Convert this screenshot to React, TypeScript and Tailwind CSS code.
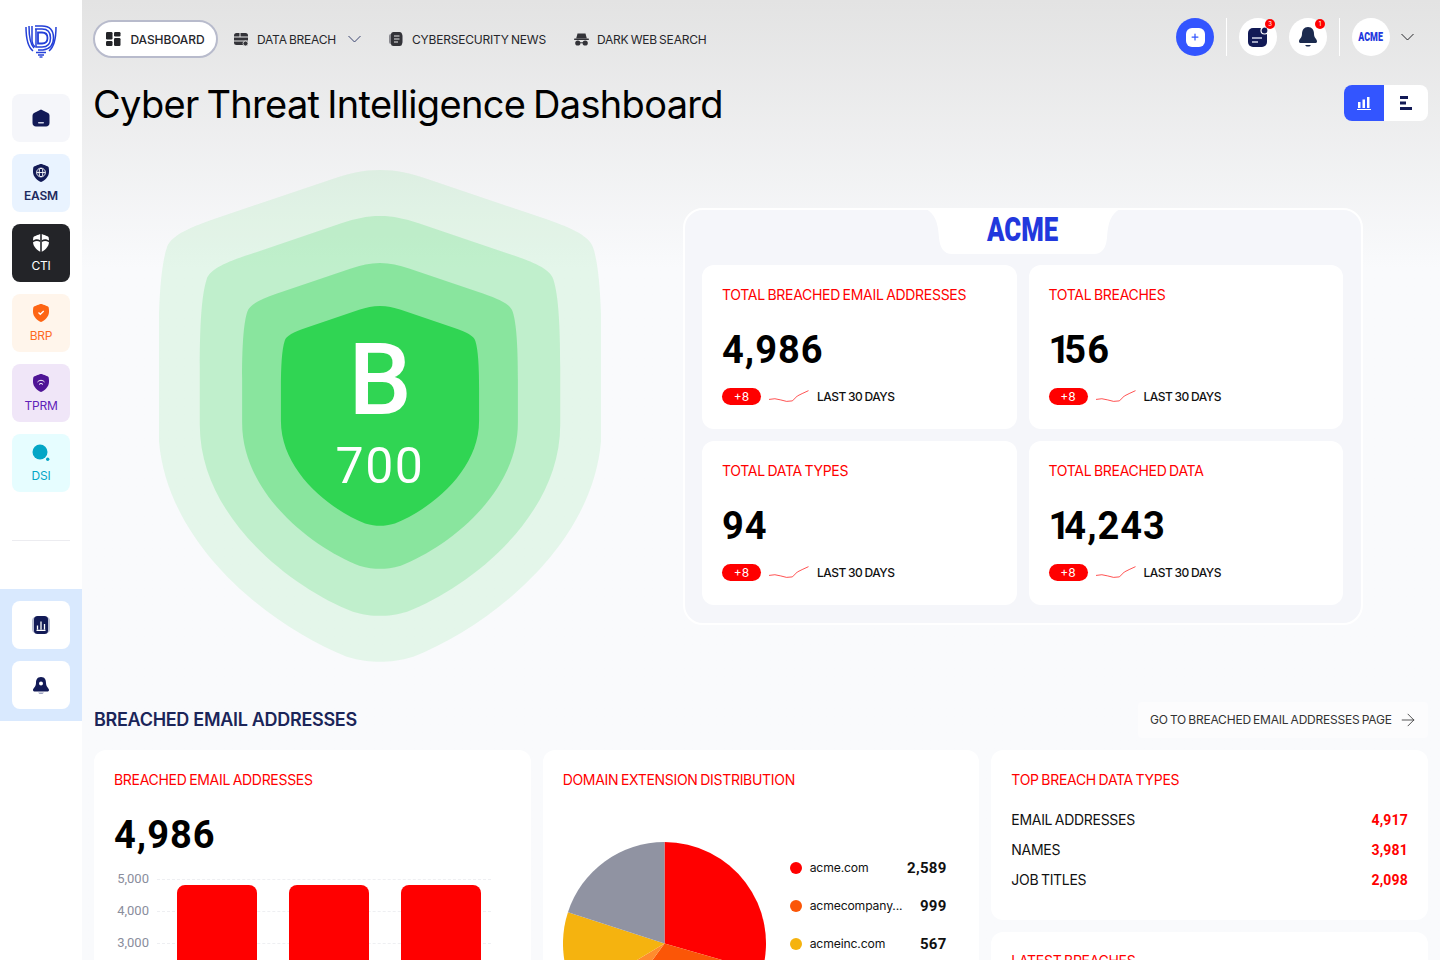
import { ArrowRight, Plus } from "lucide-react";

const shieldPath =
  "M0 0 C-50 0 -90 10 -140 26 L-500 148 C-580 176 -630 200 -640 235 C-658 290 -665 400 -665 560 L-665 770 C-665 1110 -330 1370 -100 1460 C-60 1472 -30 1475 0 1475 C30 1475 60 1472 100 1460 C330 1370 665 1110 665 770 L665 560 C665 400 658 290 640 235 C630 200 580 176 500 148 L140 26 C90 10 50 0 0 0 Z";

// small shield used by the sidebar icons
const miniShield = "M8 0 C9 0 14 2 15 2.6 C15.6 3 16 4 16 8 C16 13 11 17 8 18 C5 17 0 13 0 8 C0 4 .4 3 1 2.6 C2 2 7 0 8 0 Z";

function Logo() {
  return (
    <svg width="32" height="33" viewBox="0 0 32 33" fill="none" stroke="#2440d8" strokeWidth="1.5">
      <path d="M1 2 C1 14 3 22 8 26" />
      <path d="M4 1 C4 12 5 19 9 23" />
      <path d="M7 1 V 16 C7 19 8 20 10 22" />
      <path d="M31 2 C31 14 29 22 24 26" />
      <path d="M10 1 H17 C26 1 28.5 6 28.5 13 C28.5 20 25 24 18 25 H13" />
      <path d="M10 4 H17 C23 4 25.5 7 25.5 13 C25.5 19 23 22 17 22 H11 V4" />
      <path d="M13 7.500 H17 C21 7.500 22.500 9.500 22.500 13 C22.500 16.500 21 18.500 17 18.500 H13 Z" strokeWidth="1.8" />
      <path d="M11 27.500 H21 M13 30 H19" strokeWidth="1.3" />
      <path d="M14.500 32 H17.500" strokeWidth="1.4" />
    </svg>
  );
}

function HomeIcon() {
  return (
    <svg width="18" height="18" viewBox="0 0 18 18">
      <path d="M9 .5 L16 4 C17 4.600 17.500 5.500 17.500 7 V14 C17.500 16 16 17.500 14 17.500 H4 C2 17.500 .5 16 .5 14 V7 C.5 5.500 1 4.600 2 4 Z" fill="#121a56" />
      <rect x="6" y="13" width="6" height="1.500" rx=".7" fill="#cfd3e6" />
    </svg>
  );
}

function EasmIcon() {
  return (
    <svg width="16" height="18" viewBox="0 0 16 18">
      <path d={miniShield} fill="#121a56" />
      <g fill="none" stroke="#fff" strokeWidth=".9">
        <circle cx="8" cy="8.500" r="4.400" />
        <ellipse cx="8" cy="8.500" rx="1.900" ry="4.400" />
        <path d="M3.600 8.500 H12.400" />
      </g>
    </svg>
  );
}

function CtiIcon() {
  return (
    <svg width="16" height="18" viewBox="0 0 16 18">
      <path d={miniShield} fill="#fff" />
      <path d="M7.200 0 H8.800 V18 H7.200 Z" fill="#232428" />
      <path d="M0 6.500 C3 4.800 5 5 7.200 6.200 V8 C5 6.800 3 6.600 0 8.200 Z M16 6.500 C13 4.800 11 5 8.800 6.200 V8 C11 6.800 13 6.600 16 8.200 Z" fill="#232428" />
    </svg>
  );
}

function BrpIcon() {
  return (
    <svg width="16" height="18" viewBox="0 0 16 18">
      <path d={miniShield} fill="#fd6514" />
      <path d="M5.500 8.500 L7.300 10.300 L10.700 7" fill="none" stroke="#fff" strokeWidth="1.300" />
    </svg>
  );
}

function TprmIcon() {
  return (
    <svg width="16" height="18" viewBox="0 0 16 18">
      <path d={miniShield} fill="#4f1596" />
      <path d="M4.500 8 C6.500 5.800 9.500 5.800 11.500 8 M6 10.500 C7.200 9.200 8.800 9.200 10 10.500" fill="none" stroke="#fff" strokeWidth="1" />
    </svg>
  );
}

function DsiIcon() {
  return (
    <svg width="18" height="18" viewBox="0 0 18 18">
      <circle cx="8" cy="8" r="7.500" fill="#04a6c6" />
      <circle cx="15.700" cy="15.300" r="1.700" fill="#04a6c6" />
    </svg>
  );
}

function ReportIcon() {
  return (
    <svg width="18" height="18" viewBox="0 0 18 18">
      <rect x="0" y="1" width="18" height="16" rx="4" fill="#b9bdd2" />
      <rect x="2" y="0" width="14" height="18" rx="3.500" fill="#121a56" />
      <path d="M5.500 13.500 V9.500 M9 13.500 V5.500 M12.500 13.500 V8 M4.500 14.300 H13.500" stroke="#fff" strokeWidth="1.300" />
    </svg>
  );
}

function AlertIcon() {
  return (
    <svg width="16" height="17" viewBox="0 0 16 17">
      <path d="M8 0 C12 0 13 3 13 6 C13 10 16 11 16 13 C16 14 15 14.500 14 14.500 H2 C1 14.500 0 14 0 13 C0 11 3 10 3 6 C3 3 4 0 8 0 Z" fill="#121a56" />
      <circle cx="8" cy="6.500" r="2" fill="#fff" />
      <path d="M5 15.500 H11 L9.500 17 H6.500 Z" fill="#9da2c0" />
    </svg>
  );
}

function SideItem({ icon, label, className }: { icon: React.ReactNode; label?: string; className: string }) {
  return (
    <div className={`flex w-[58px] flex-col items-center justify-center rounded-lg ${label ? "h-[58px] gap-[7px]" : "h-12"} ${className}`}>
      {icon}
      {label && <span className="text-xs leading-[14px] tracking-[-0.2px]">{label}</span>}
    </div>
  );
}

function Sidebar() {
  return (
    <aside className="flex h-full w-[82px] shrink-0 flex-col bg-white">
      <div className="flex h-[94px] justify-center pt-[25px]">
        <Logo />
      </div>
      <div className="flex flex-col items-center gap-3">
        <SideItem icon={<HomeIcon />} className="bg-[#f5f6fa]" />
        <SideItem icon={<EasmIcon />} label="EASM" className="bg-[#e9f3ff] font-semibold text-[#1e2a5e]" />
        <SideItem icon={<CtiIcon />} label="CTI" className="bg-[#232428] text-white" />
        <SideItem icon={<BrpIcon />} label="BRP" className="bg-[#fff5eb] text-[#fd6a1f]" />
        <SideItem icon={<TprmIcon />} label="TPRM" className="bg-[#f0e6f8] text-[#5f22b8]" />
        <SideItem icon={<DsiIcon />} label="DSI" className="bg-[#e6fdff] text-[#04a6c6]" />
      </div>
      <div className="mx-3 mt-12 h-px bg-[#ececf0]" />
      <div className="mt-12 flex flex-col items-center gap-3 bg-[#d9e9fe] py-3">
        <SideItem icon={<ReportIcon />} className="bg-white" />
        <SideItem icon={<AlertIcon />} className="bg-white" />
      </div>
    </aside>
  );
}

function Chevron({ className }: { className: string }) {
  return (
    <svg width="13" height="8" viewBox="0 0 13 8" fill="none" stroke="currentColor" strokeWidth="1" className={className}>
      <path d="M.5 1 L6.500 7 L12.500 1" />
    </svg>
  );
}

function DashIcon() {
  return (
    <svg width="15" height="14" viewBox="0 0 15 14" fill="#232428">
      <rect x="0" y="0" width="6.500" height="7.500" rx="1.200" />
      <rect x="8" y="0" width="6.500" height="4.500" rx="1.200" />
      <rect x="0" y="9" width="6.500" height="5" rx="1.200" />
      <rect x="8" y="6" width="6.500" height="8" rx="1.200" />
    </svg>
  );
}

function BreachIcon() {
  return (
    <svg width="15" height="13" viewBox="0 0 15 13">
      <rect x="0" y="0" width="14" height="12" rx="2.500" fill="#333338" />
      <path d="M0 4 H14 M0 8 H14 M6 0 V4" stroke="#e8e8e8" strokeWidth="1" />
      <circle cx="11.500" cy="10.500" r="2.500" fill="#333338" stroke="#e8e8e8" strokeWidth=".8" />
    </svg>
  );
}

function NewsIcon() {
  return (
    <svg width="15" height="14" viewBox="0 0 15 14">
      <rect x="0" y="2" width="14" height="10" rx="2" fill="#8a8a90" />
      <rect x="2" y="0" width="11" height="14" rx="2.500" fill="#333338" />
      <path d="M5 4 H10.500 M5 7 H10.500 M5 10 H9" stroke="#e8e8e8" strokeWidth="1" />
    </svg>
  );
}

function HatIcon() {
  return (
    <svg width="15" height="13" viewBox="0 0 15 13" fill="#333338">
      <path d="M3.500 .5 H11.500 L12.800 5.500 H2.200 Z" />
      <rect x="0" y="5.500" width="15" height="1.400" rx=".7" />
      <circle cx="3.800" cy="10" r="2.600" />
      <circle cx="11.200" cy="10" r="2.600" />
      <rect x="5.500" y="9.300" width="4" height="1" />
    </svg>
  );
}

function NavItem({ icon, label }: { icon: React.ReactNode; label: string }) {
  return (
    <div className="flex items-center gap-2 text-xs tracking-[-0.2px] text-[#26262b] [word-spacing:-1px]">
      {icon}
      <span className="pt-px">{label}</span>
    </div>
  );
}

function NoteIcon() {
  return (
    <svg width="20" height="20" viewBox="0 0 20 20">
      <rect x="0" y="1" width="19" height="19" rx="5" fill="#121a56" />
      <path d="M4 11 H14 M4 15 H10" stroke="#cfd3e6" strokeWidth="1.500" />
      <circle cx="16.500" cy="3.500" r="3.500" fill="#121a56" stroke="#fff" strokeWidth="1.200" />
    </svg>
  );
}

function BellIcon() {
  return (
    <svg width="18" height="20" viewBox="0 0 18 20" fill="#1b2a4e">
      <path d="M9 0 C13 0 15 3 15 7 C15 11 18 12 18 14.500 C18 15.500 17 16 16 16 H2 C1 16 0 15.500 0 14.500 C0 12 3 11 3 7 C3 3 5 0 9 0 Z" />
      <path d="M6 18 H12 L10.500 19.500 H7.500 Z" />
    </svg>
  );
}

function RoundBadge({ children, count }: { children: React.ReactNode; count: string }) {
  return (
    <div className="relative flex h-[38px] w-[38px] items-center justify-center rounded-full bg-white">
      {children}
      <span className="absolute right-[2px] top-[1px] flex h-2.5 w-2.5 items-center justify-center rounded-full bg-[#ff0000] text-[6px] leading-none text-white">
        {count}
      </span>
    </div>
  );
}

function TopNav() {
  return (
    <div className="flex h-[38px] items-center">
      <div className="-ml-px flex h-[38px] w-[125px] items-center justify-center gap-[9px] rounded-full border-2 border-[#b8bbcc] bg-white text-xs font-medium tracking-[-0.1px] text-[#26262b]">
        <DashIcon />
        <span className="pt-px">DASHBOARD</span>
      </div>
      <div className="ml-4 flex items-center gap-[28px]">
        <div className="flex items-center gap-3">
          <NavItem icon={<BreachIcon />} label="DATA BREACH" />
          <Chevron className="text-[#3b4470]" />
        </div>
        <NavItem icon={<NewsIcon />} label="CYBERSECURITY NEWS" />
        <NavItem icon={<HatIcon />} label="DARK WEB SEARCH" />
      </div>
      <div className="-mt-1 ml-auto flex items-center">
        <div className="flex h-[38px] w-[38px] items-center justify-center rounded-full bg-[#3355ff]">
          <div className="flex h-[19px] w-[19px] items-center justify-center rounded-[6px] bg-white">
            <Plus size={10} strokeWidth={3} className="text-[#3355ff]" />
          </div>
        </div>
        <div className="mx-[12px] h-[38px] w-px bg-white" />
        <RoundBadge count="3">
          <NoteIcon />
        </RoundBadge>
        <div className="w-3" />
        <RoundBadge count="1">
          <BellIcon />
        </RoundBadge>
        <div className="mx-[12px] h-[38px] w-px bg-white" />
        <div className="flex h-[38px] w-[38px] items-center justify-center rounded-full bg-white">
          <span className="scale-x-[.74] font-[Roboto,sans-serif] text-[12px] font-black leading-none text-[#2238dd]">ACME</span>
        </div>
        <Chevron className="ml-[11px] mr-[14px] text-[#26262b]" />
      </div>
    </div>
  );
}

function ViewToggle() {
  return (
    <div className="flex h-9 w-[84px] overflow-hidden rounded-lg bg-white">
      <div className="flex w-10 items-center justify-center bg-[#3355ff]">
        <svg width="14" height="14" viewBox="0 0 14 14" fill="#fff">
          <rect x="1" y="6" width="2.500" height="6" />
          <rect x="5.500" y="3.500" width="2.500" height="8.500" />
          <rect x="10" y="1" width="2.500" height="11" />
          <rect x="0" y="13" width="14" height="1" />
        </svg>
      </div>
      <div className="flex flex-1 items-center justify-center">
        <svg width="12" height="14" viewBox="0 0 12 14" fill="#121a56">
          <rect x="0" y="0" width="8" height="3" />
          <rect x="0" y="5.500" width="6" height="3" />
          <rect x="0" y="11" width="12" height="3" />
        </svg>
      </div>
    </div>
  );
}

function ScoreShield() {
  const layers = [
    { s: 1, y: 0, o: 0.1 },
    { s: 0.813, y: 46, o: 0.2 },
    { s: 0.622, y: 93, o: 0.38 },
    { s: 0.447, y: 136, o: 1 },
  ];
  return (
    <div className="relative h-[492px] w-[442px] shrink-0">
      <svg width="442" height="492" viewBox="0 0 442 492">
        {layers.map((l) => (
          <path
            key={l.s}
            d={shieldPath}
            fill="#30d553"
            fillOpacity={l.o}
            transform={`translate(221 ${l.y}) scale(${l.s / 3})`}
          />
        ))}
      </svg>
      <div className="absolute inset-x-0 top-[150px] flex flex-col items-center font-[Roboto,sans-serif] text-white">
        <span className="text-[100px] font-medium leading-[120px]">B</span>
        <span className="-mt-[3px] text-[50px] leading-[58px] tracking-[1.5px]">700</span>
      </div>
    </div>
  );
}

function Sparkline() {
  return (
    <svg width="40" height="13" viewBox="0 0 41 13" fill="none" stroke="#ff0000" strokeWidth=".7">
      <path d="M0 9.500 L6 8.800 L12 10 L18 11.500 L24 11 L29 6 L34 3.500 L40.500 .5" />
    </svg>
  );
}

// the reference's digit 1 is much narrower than Roboto's tabular one
function Digits({ value }: { value: string }) {
  return (
    <>
      {value.split("").map((c, i) => (
        <span key={i} className={c === "1" ? "tracking-[-6px]" : ""}>
          {c}
        </span>
      ))}
    </>
  );
}

function StatCard({ title, value }: { title: string; value: string }) {
  return (
    <div className="flex h-[164px] flex-col rounded-xl bg-white px-5 pt-[21px]">
      <div className="text-sm leading-[18px] tracking-[-0.3px] text-[#ff0000] [word-spacing:-1px]">{title}</div>
      <div className="mt-[23px] font-[Roboto,sans-serif] text-[38px] font-bold leading-[46px] tracking-[1px] text-black">
        <Digits value={value} />
      </div>
      <div className="mt-[15px] flex items-center gap-2">
        <span className="flex h-[17px] w-[39px] items-center justify-center rounded-full bg-[#ff0000] text-xs text-white">+8</span>
        <Sparkline />
        <span className="text-xs font-medium tracking-[-0.5px] text-[#111] [word-spacing:-0.5px]">LAST 30 DAYS</span>
      </div>
    </div>
  );
}

function AcmePanel() {
  return (
    <div className="mt-[38px] flex h-[417px] w-[680px] flex-col items-center rounded-[20px] border-2 border-white bg-[#f5f6fa] pl-[17px] pr-[18px]">
      <div className="relative -mt-[2px] flex h-[46px] w-[194px] items-center justify-center">
        <svg className="absolute inset-0" width="194" height="46" viewBox="0 0 194 46">
          <path d="M0 1 H194 C185 6 182 14 181 30 C180 40 176 46 168 46 H26 C18 46 14 40 13 30 C12 14 9 6 0 1 Z" fill="#fff" />
        </svg>
        <span className="relative -mt-1 scale-x-[.78] font-[Roboto,sans-serif] text-[33px] font-black leading-none text-[#2238dd]">
          ACME
        </span>
      </div>
      <div className="mt-[11px] grid w-full grid-cols-2 gap-3">
        <StatCard title="TOTAL BREACHED EMAIL ADDRESSES" value="4,986" />
        <StatCard title="TOTAL BREACHES" value="156" />
        <StatCard title="TOTAL DATA TYPES" value="94" />
        <StatCard title="TOTAL BREACHED DATA" value="14,243" />
      </div>
    </div>
  );
}

function GridRow({ label }: { label: string }) {
  return (
    <div className="flex h-8 items-center gap-2">
      <span className="w-[35px] shrink-0 text-right font-[Roboto,sans-serif] text-[13px] text-[#8a8d9c]">{label}</span>
      <div className="h-0 w-[334px] border-t border-dashed border-[#eeeff2]" />
    </div>
  );
}

function BarChartCard() {
  return (
    <div className="h-[400px] rounded-xl bg-white p-5">
      <div className="text-sm leading-[20px] tracking-[-0.3px] text-[#ff0000] [word-spacing:-1px]">BREACHED EMAIL ADDRESSES</div>
      <div className="mt-[22px] font-[Roboto,sans-serif] text-[38px] font-bold leading-[46px] tracking-[1px] text-black">4,986</div>
      <div className="relative mt-[5px]">
        <GridRow label="5,000" />
        <GridRow label="4,000" />
        <GridRow label="3,000" />
        <div className="absolute left-[63px] top-[22px] flex gap-8">
          <div className="h-[100px] w-20 rounded-t-lg bg-[#ff0000]" />
          <div className="h-[100px] w-20 rounded-t-lg bg-[#ff0000]" />
          <div className="h-[100px] w-20 rounded-t-lg bg-[#ff0000]" />
        </div>
      </div>
    </div>
  );
}

function slice(from: number, to: number, r: number) {
  const pt = (a: number) => {
    const t = (a * Math.PI) / 180;
    return `${(r + r * Math.sin(t)).toFixed(2)} ${(r - r * Math.cos(t)).toFixed(2)}`;
  };
  return `M${r} ${r} L${pt(from)} A${r} ${r} 0 ${to - from > 180 ? 1 : 0} 1 ${pt(to)} Z`;
}

const pieSlices = [
  { from: 0, to: 106, color: "#ff0000" },
  { from: 106, to: 216, color: "#fb5607" },
  { from: 216, to: 239, color: "#ff8c2e" },
  { from: 239, to: 288, color: "#f5b30f" },
  { from: 288, to: 360, color: "#9093a2" },
];

const legend = [
  { name: "acme.com", value: "2,589", dot: "bg-[#ff0000]" },
  { name: "acmecompany...", value: "999", dot: "bg-[#fb5607]" },
  { name: "acmeinc.com", value: "567", dot: "bg-[#f5b30f]" },
];

function PieCard() {
  return (
    <div className="h-[400px] rounded-xl bg-white p-5">
      <div className="text-sm leading-[20px] tracking-[-0.3px] text-[#ff0000] [word-spacing:-1px]">DOMAIN EXTENSION DISTRIBUTION</div>
      <div className="mt-[52px] flex">
        <svg width="203" height="203" viewBox="0 0 204 204" className="shrink-0">
          {pieSlices.map((s) => (
            <path key={s.from} d={slice(s.from, s.to, 102)} fill={s.color} />
          ))}
        </svg>
        <div className="ml-[24px] mt-4 flex w-[157px] flex-col gap-[18px]">
          {legend.map((l) => (
            <div key={l.name} className="flex h-5 items-center">
              <span className={`h-3 w-3 rounded-full ${l.dot}`} />
              <span className="ml-2 text-[12.2px] tracking-[-0.15px] text-[#111]">{l.name}</span>
              <span className="ml-auto font-[Roboto,sans-serif] text-[15px] font-bold tracking-[.3px] text-[#111]">{l.value}</span>
            </div>
          ))}
        </div>
      </div>
    </div>
  );
}

const dataTypes = [
  { name: "EMAIL ADDRESSES", value: "4,917" },
  { name: "NAMES", value: "3,981" },
  { name: "JOB TITLES", value: "2,098" },
];

function RightColumn() {
  return (
    <div className="flex flex-col gap-3">
      <div className="h-[170px] rounded-xl bg-white p-5">
        <div className="text-sm leading-[20px] tracking-[-0.3px] text-[#ff0000] [word-spacing:-1px]">TOP BREACH DATA TYPES</div>
        <div className="mt-5 flex flex-col gap-2.5">
          {dataTypes.map((d) => (
            <div key={d.name} className="flex h-5 items-center justify-between text-sm tracking-[-0.3px] text-[#111] [word-spacing:-1px]">
              <span>{d.name}</span>
              <span className="font-[Roboto,sans-serif] text-sm font-bold tracking-[.2px] text-[#ff0000]">{d.value}</span>
            </div>
          ))}
        </div>
      </div>
      <div className="h-[200px] rounded-xl bg-white p-5">
        <div className="text-sm leading-[18px] tracking-[-0.3px] text-[#ff0000] [word-spacing:-1px]">LATEST BREACHES</div>
      </div>
    </div>
  );
}

export default function App() {
  return (
    <div className="flex h-[960px] overflow-hidden font-[Inter,sans-serif]">
      <Sidebar />
      <main className="min-w-0 flex-1 bg-linear-to-b from-[#e3e3e3] to-[#f9fafc] to-[28%] px-3 pt-5">
        <TopNav />
        <div className="mt-[27px] flex items-start justify-between">
          <h1 className="-ml-px text-[38px] font-normal leading-[38px] tracking-[-0.7px] text-black [word-spacing:-2px]">Cyber Threat Intelligence Dashboard</h1>
          <ViewToggle />
        </div>
        <div className="mt-[47px] flex items-start">
          <div className="ml-[65px]">
            <ScoreShield />
          </div>
          <div className="ml-[82px]">
            <AcmePanel />
          </div>
        </div>
        <div className="mt-10 flex h-9 items-center justify-between">
          <h2 className="text-lg font-semibold tracking-[-0.3px] text-[#1b2559]">BREACHED EMAIL ADDRESSES</h2>
          <div className="flex h-9 w-[290px] items-center gap-[6px] rounded bg-[#fcfcfd] pl-3 text-xs tracking-[-0.2px] text-[#333] [word-spacing:-1px]">
            <span>GO TO BREACHED EMAIL ADDRESSES PAGE</span>
            <ArrowRight size={20} strokeWidth={1} />
          </div>
        </div>
        <div className="mt-3 grid grid-cols-3 gap-3">
          <BarChartCard />
          <PieCard />
          <RightColumn />
        </div>
      </main>
    </div>
  );
}
